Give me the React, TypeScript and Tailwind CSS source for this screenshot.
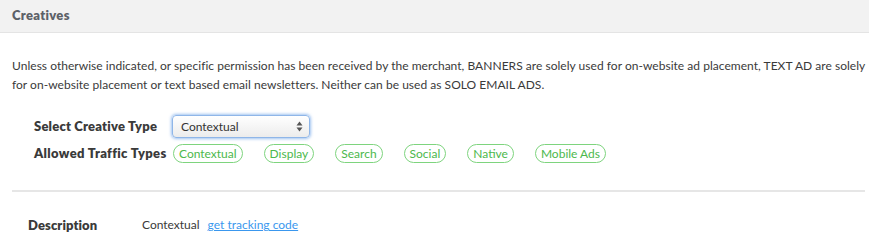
import React from "react";

const pills = ["Contextual", "Display", "Search", "Social", "Native", "Mobile Ads"];

export default function App() {
  return (
    <div className="w-[869px] h-[241px] bg-white text-[12px] text-[#3a3a3a]" style={{ fontFamily: "Lato, 'Noto Sans', sans-serif" }}>
      <div className="h-[33px] bg-[#f2f2f2] border-b border-[#e4e4e4] flex items-center px-[12px]">
        <span className="font-extrabold text-[#5c6168] text-[13px] tracking-[0.3px]">Creatives</span>
      </div>
      <p className="px-[12px] pt-[23px] leading-[19px] text-[12px] text-[#3a3a3a] whitespace-nowrap tracking-[0.03px]">
        Unless otherwise indicated, or specific permission has been received by the merchant, BANNERS are solely used for on-website ad placement, TEXT AD are solely
        <br />
        for on-website placement or text based email newsletters. Neither can be used as SOLO EMAIL ADS.
      </p>
      <div className="pl-[34px] pt-[21px] flex flex-col gap-[6px]">
        <div className="flex items-center">
          <span className="w-[138px] font-extrabold text-[13px] tracking-[0.2px] text-[#3a3a3a]">Select Creative Type</span>
          <div className="w-[138px] h-[23px] rounded-[4px] border border-[#8fb6e8] shadow-[0_0_3px_1px_rgba(120,170,235,0.7)] bg-gradient-to-b from-white to-[#ececec] flex items-center justify-between pl-[8px] pr-[6px]">
            <span className="text-[#333]">Contextual</span>
            <svg width="7" height="11" viewBox="0 0 7 11"><path d="M3.5 0.5 L6.5 4.5 H0.5 Z" fill="#555"/><path d="M3.5 10.5 L6.5 6.5 H0.5 Z" fill="#555"/></svg>
          </div>
        </div>
        <div className="flex items-center">
          <span className="w-[139px] font-extrabold text-[13px] tracking-[0.35px] text-[#3a3a3a] whitespace-nowrap">Allowed Traffic Types</span>
          <div className="flex gap-[21px]">
            {pills.map((p) => (
              <span key={p} className="h-[19px] px-[5px] rounded-full border border-[#7ed47e] text-[#4cb84c] flex items-center leading-none">{p}</span>
            ))}
          </div>
        </div>
      </div>
      <div className="mx-[12px] mt-[26px] w-[853px] h-[2px] bg-[#e6e6e6]" />
      <div className="flex items-center pl-[28px] pt-[24px]">
        <span className="w-[114px] font-extrabold text-[13px] tracking-[0.1px] text-[#3a3a3a]">Description</span>
        <span>Contextual</span>
        <a className="ml-[8px] text-[#3a97ee] underline">get tracking code</a>
      </div>
    </div>
  );
}
